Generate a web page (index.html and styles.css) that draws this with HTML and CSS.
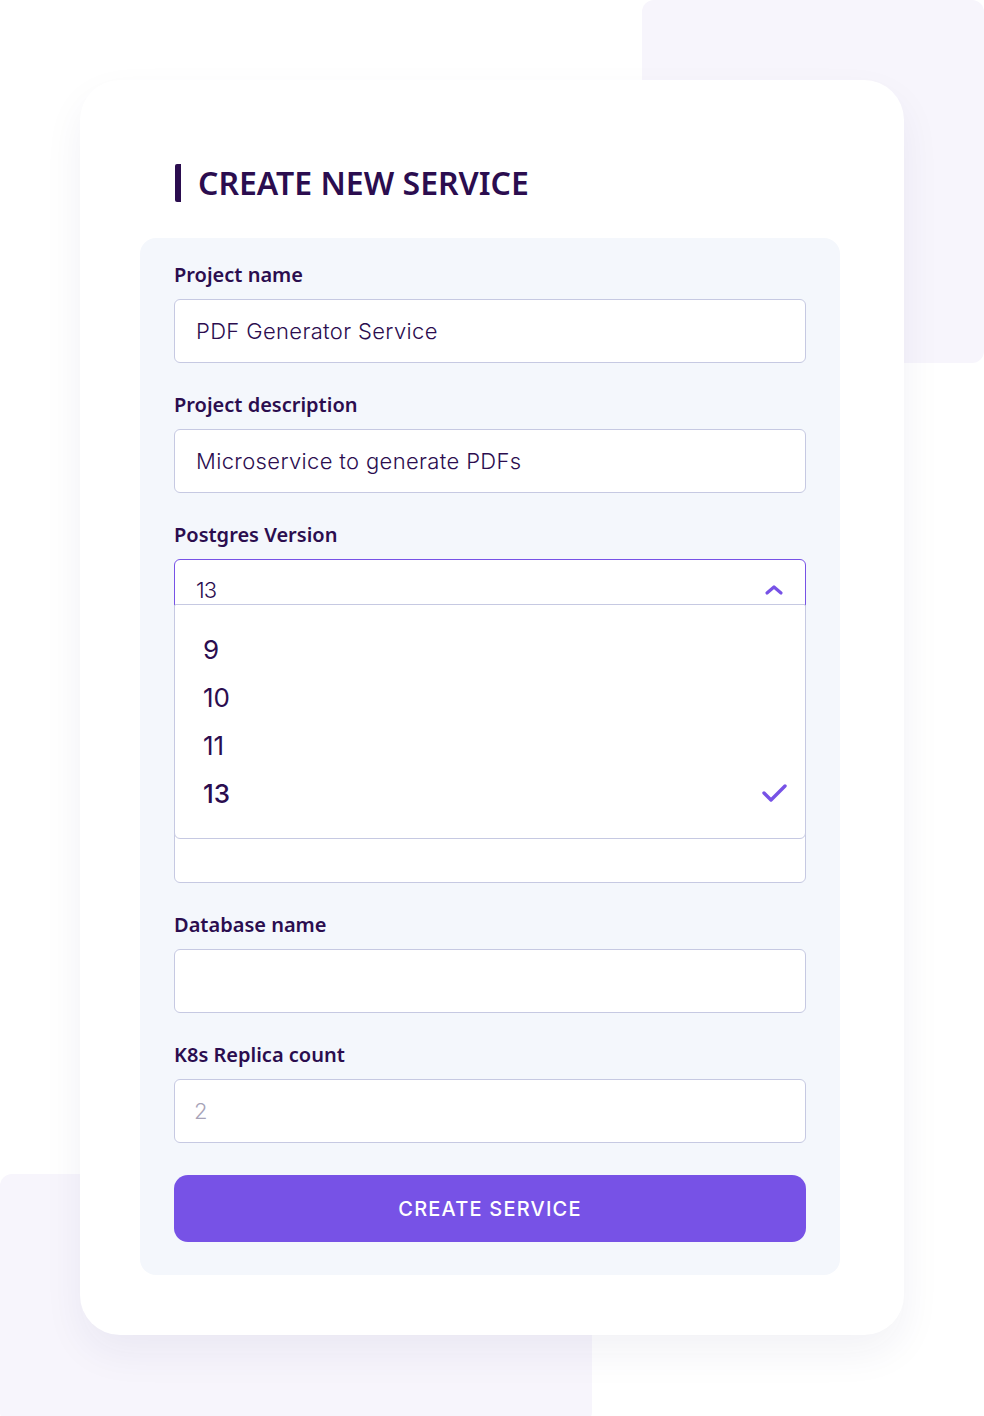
FILE: index.html
```html
<!DOCTYPE html>
<html lang="en">

<head>
    <meta charset="UTF-8">
    <meta name="viewport" content="width=device-width, initial-scale=1.0">
    <title>Create New Service</title>
    <link rel="stylesheet" href="styles.css">
</head>

<body>
    <div class="deco deco-top"></div>
    <div class="deco deco-bottom"></div>

    <div class="page">
        <div class="card">
            <h1 class="title">CREATE NEW SERVICE</h1>

            <form class="panel">
                <div class="field">
                    <label class="label">Project name</label>
                    <div class="input">PDF Generator Service</div>
                </div>

                <div class="field">
                    <label class="label">Project description</label>
                    <div class="input">Microservice to generate PDFs</div>
                </div>

                <div class="field">
                    <label class="label">Postgres Version</label>
                    <div class="select-wrap">
                        <div class="input select">
                            <span class="select-value">13</span>
                            <svg class="chevron" width="20" height="12" viewBox="0 0 20 12">
                                <path d="M3 9 L10 3 L17 9" fill="none" stroke="#7752e6" stroke-width="3.2"
                                    stroke-linecap="round" stroke-linejoin="round" />
                            </svg>
                        </div>
                        <ul class="options">
                            <li class="option">9</li>
                            <li class="option">10</li>
                            <li class="option">11</li>
                            <li class="option selected">13
                                <svg class="check" width="28" height="22" viewBox="0 0 28 22">
                                    <path d="M3 11 L10 18 L24 4" fill="none" stroke="#7752e6" stroke-width="3.4"
                                        stroke-linecap="round" stroke-linejoin="round" />
                                </svg>
                            </li>
                        </ul>
                    </div>
                </div>

                <!-- fields covered by the open dropdown -->
                <div class="field">
                    <label class="label"></label>
                    <div class="input"></div>
                </div>

                <div class="field">
                    <label class="label"></label>
                    <div class="input"></div>
                </div>

                <div class="field">
                    <label class="label">Database name</label>
                    <div class="input"></div>
                </div>

                <div class="field">
                    <label class="label">K8s Replica count</label>
                    <div class="input placeholder">2</div>
                </div>

                <button type="button" class="submit">CREATE SERVICE</button>
            </form>
        </div>
    </div>
</body>

</html>
```

FILE: styles.css
```css
/* styles.css */

body {
    margin: 0;
    background-color: #ffffff;
    font-family: "Noto Sans", sans-serif;
    color: #2b0d4f;
    position: relative;
    min-height: 1416px;
    overflow: hidden;
}

.deco {
    position: absolute;
    background-color: #f7f5fc;
    border-radius: 12px;
    z-index: 0;
}

.deco-top {
    left: 642px;
    top: 0;
    width: 342px;
    height: 363px;
}

.deco-bottom {
    left: 0;
    top: 1174px;
    width: 592px;
    height: 250px;
}

.page {
    position: relative;
    z-index: 1;
    padding: 80px 0 0 80px;
}

.card {
    width: 824px;
    box-sizing: border-box;
    background-color: #ffffff;
    border-radius: 40px;
    padding: 84px 64px 60px 60px;
    box-shadow: 0 18px 40px rgba(40, 30, 110, 0.06);
}

.title {
    margin: 0 0 36px 35px;
    padding-left: 17px;
    border-left: 6px solid #2b0d4f;
    border-radius: 2px;
    font-size: 32px;
    line-height: 38px;
    font-weight: 600;
    color: #2b0d4f;
}

.panel {
    background-color: #f4f7fc;
    border-radius: 16px;
    padding: 25px 34px 33px 34px;
    display: flex;
    flex-direction: column;
    gap: 30px;
}

.field {
    display: flex;
    flex-direction: column;
    gap: 12px;
}

.label {
    min-height: 24px;
    font-size: 20px;
    line-height: 24px;
    font-weight: 600;
    color: #2b0d4f;
}

.input {
    height: 64px;
    box-sizing: border-box;
    background-color: #ffffff;
    border: 1px solid #c6c9e2;
    border-radius: 6px;
    padding: 0 21px;
    display: flex;
    align-items: center;
    font-family: Inter, sans-serif;
    font-size: 22px;
    font-weight: 300;
    letter-spacing: 0.35px;
    color: #2b0d4f;
}

.placeholder {
    color: #a7a3b8;
    padding-left: 19px;
}

.select-wrap {
    position: relative;
}

.select {
    border-color: #7752e6;
    justify-content: space-between;
    align-items: flex-start;
    padding-top: 17px;
    padding-right: 21px;
}

.select-value {
    font-size: 22px;
    letter-spacing: -1px;
}

.chevron {
    margin-top: 7px;
}

.options {
    position: absolute;
    left: 0;
    right: 0;
    top: 45px;
    height: 235px;
    box-sizing: border-box;
    margin: 0;
    padding: 20px 16px 0 28px;
    list-style: none;
    background-color: #ffffff;
    border: 1px solid #c6c9e2;
    border-radius: 2px 2px 6px 6px;
    z-index: 2;
}

.option {
    height: 48px;
    display: flex;
    align-items: center;
    justify-content: space-between;
    font-family: Inter, sans-serif;
    font-size: 26px;
    font-weight: 400;
    color: #2b0d4f;
}

.option.selected {
    font-weight: 500;
}

.submit {
    margin-top: 2px;
    height: 67px;
    border: none;
    border-radius: 14px;
    background-color: #7752e6;
    color: #ffffff;
    font-family: Inter, sans-serif;
    font-size: 20px;
    font-weight: 500;
    letter-spacing: 1.2px;
    cursor: pointer;
}
```
